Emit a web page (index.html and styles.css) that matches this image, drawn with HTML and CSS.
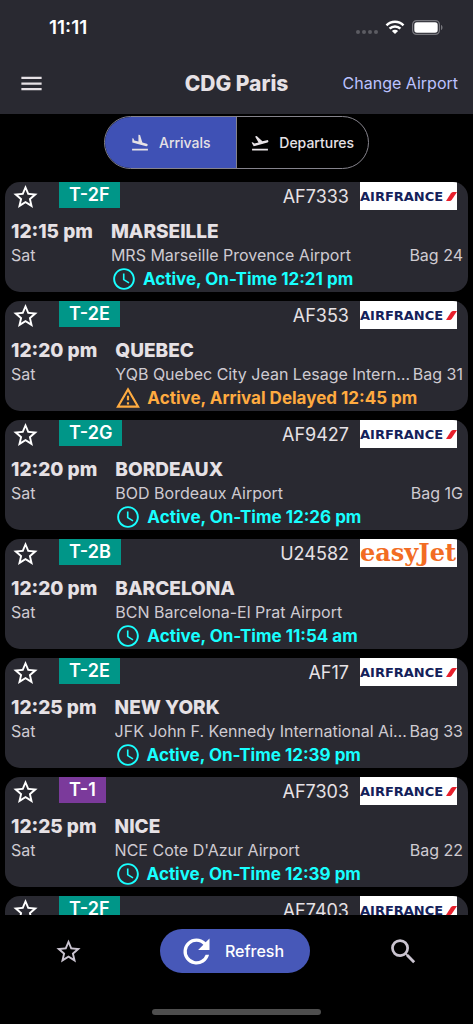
FILE: index.html
```html
<!DOCTYPE html>
<html lang="en">
<head>
<meta charset="utf-8">
<meta name="viewport" content="width=device-width, initial-scale=1">
<title>CDG Paris</title>
<link rel="stylesheet" href="styles.css">
</head>
<body>
<svg class="sprite" aria-hidden="true">
  <symbol id="star" viewBox="0 0 24 24"><path d="M22 9.24l-7.19-.62L12 2 9.19 8.63 2 9.24l5.46 4.73L5.82 21 12 17.27 18.18 21l-1.63-7.03L22 9.24zM12 15.4l-3.76 2.27 1-4.28-3.32-2.88 4.38-.38L12 6.1l1.71 4.04 4.38.38-3.32 2.88 1 4.28L12 15.4z"/></symbol>
  <symbol id="clock" viewBox="0 0 24 24"><path d="M11.99 2C6.47 2 2 6.48 2 12s4.47 10 9.99 10C17.52 22 22 17.52 22 12S17.52 2 11.99 2zM12 20.2c-4.53 0-8.2-3.67-8.2-8.2s3.67-8.2 8.2-8.2 8.2 3.67 8.2 8.2-3.67 8.2-8.2 8.2zm.5-13.2H11v6l5.25 3.15.75-1.23-4.5-2.67z"/></symbol>
  <symbol id="warning" viewBox="0 0 24 24"><path d="M12 5.99L19.53 19H4.47L12 5.99M12 2L1 21h22L12 2zm1 14h-2v2h2v-2zm0-6h-2v4h2v-4z"/></symbol>
  <symbol id="slash" viewBox="0 0 12 9"><path fill="#e8202c" d="M1 9L6 1.200Q6.800 0 8.500 0H12L7 7.500Q6 9 4.500 9z"/></symbol>
</svg>

<header class="app-header">
  <div class="status-bar">
    <span class="clock">11:11</span>
    <span class="indicators">
      <svg class="signal" width="22" height="14" viewBox="0 0 22 14"><g fill="#5c5c63"><circle cx="2" cy="11" r="2"/><circle cx="8" cy="11" r="2"/><circle cx="14" cy="11" r="2"/><circle cx="20" cy="11" r="2"/></g></svg>
      <svg width="20" height="14" viewBox="0 0 20 14"><path fill="none" stroke="#fff" stroke-width="2.500" d="M1.500 5.400a12 12 0 0 1 17 0M4.600 8.700a7.600 7.600 0 0 1 10.800 0"/><path fill="#fff" d="M6.900 11a4.400 4.400 0 0 1 6.200 0L10 14z"/></svg>
      <svg width="31" height="15" viewBox="0 0 31 15"><rect x=".6" y=".6" width="26.800" height="13.800" rx="4" fill="none" stroke="#77777d" stroke-width="1.200"/><rect x="2.300" y="2.300" width="23.400" height="10.400" rx="2.600" fill="#fff"/><path fill="#77777d" d="M29 5c2 .6 2 4.400 0 5z"/></svg>
    </span>
  </div>
  <div class="toolbar">
    <button class="menu" aria-label="Menu"><svg width="27" height="27" viewBox="0 0 24 24"><path d="M3 18h18v-2H3v2zm0-5h18v-2H3v2zm0-7v2h18V6H3z"/></svg></button>
    <h1 class="title">CDG Paris</h1>
    <button class="change">Change Airport</button>
  </div>
</header>

<nav class="segments">
  <button class="segment selected" aria-pressed="true"><svg width="20" height="20" viewBox="0 0 24 24"><path d="M2.500 19h19v2h-19v-2zm16.840-3.150c.8.210 1.620-.260 1.840-1.060.210-.8-.260-1.620-1.060-1.840l-5.310-1.420-2.760-9.020L10.120 2v8.280L5.150 8.950l-.930-2.320-1.450-.390v5.170l16.570 4.440z"/></svg>Arrivals</button>
  <button class="segment" aria-pressed="false"><svg width="20" height="20" viewBox="0 0 24 24"><path d="M2.500 19h19v2h-19zm19.570-9.360c-.210-.8-1.040-1.280-1.840-1.060L14.920 10l-6.900-6.430-1.930.510 4.140 7.170-4.970 1.330-1.970-1.540-1.450.390 2.590 4.490L21 11.490c.810-.230 1.280-1.050 1.070-1.850z"/></svg>Departures</button>
</nav>

<main class="flights">
  <article class="flight">
    <div class="flight-top"><button class="favorite" aria-label="Favorite"><svg><use href="#star"/></svg></button><span class="terminal">T-2F</span><span class="number">AF7333</span><span class="logo airfrance">AIRFRANCE<svg><use href="#slash"/></svg></span></div>
    <div class="flight-body"><span class="time">12:15 pm</span><h2 class="city">MARSEILLE</h2><span class="day">Sat</span><span class="airport">MRS Marseille Provence Airport</span><span class="bag">Bag 24</span><span class="state"><svg><use href="#clock"/></svg>Active, On-Time 12:21 pm</span></div>
  </article>
  <article class="flight">
    <div class="flight-top"><button class="favorite" aria-label="Favorite"><svg><use href="#star"/></svg></button><span class="terminal">T-2E</span><span class="number">AF353</span><span class="logo airfrance">AIRFRANCE<svg><use href="#slash"/></svg></span></div>
    <div class="flight-body"><span class="time">12:20 pm</span><h2 class="city">QUEBEC</h2><span class="day">Sat</span><span class="airport">YQB Quebec City Jean Lesage International Airport</span><span class="bag">Bag 31</span><span class="state delayed"><svg><use href="#warning"/></svg>Active, Arrival Delayed 12:45 pm</span></div>
  </article>
  <article class="flight">
    <div class="flight-top"><button class="favorite" aria-label="Favorite"><svg><use href="#star"/></svg></button><span class="terminal">T-2G</span><span class="number">AF9427</span><span class="logo airfrance">AIRFRANCE<svg><use href="#slash"/></svg></span></div>
    <div class="flight-body"><span class="time">12:20 pm</span><h2 class="city">BORDEAUX</h2><span class="day">Sat</span><span class="airport">BOD Bordeaux Airport</span><span class="bag">Bag 1G</span><span class="state"><svg><use href="#clock"/></svg>Active, On-Time 12:26 pm</span></div>
  </article>
  <article class="flight">
    <div class="flight-top"><button class="favorite" aria-label="Favorite"><svg><use href="#star"/></svg></button><span class="terminal">T-2B</span><span class="number">U24582</span><span class="logo easyjet">easyJet</span></div>
    <div class="flight-body"><span class="time">12:20 pm</span><h2 class="city">BARCELONA</h2><span class="day">Sat</span><span class="airport">BCN Barcelona-El Prat Airport</span><span class="state"><svg><use href="#clock"/></svg>Active, On-Time 11:54 am</span></div>
  </article>
  <article class="flight">
    <div class="flight-top"><button class="favorite" aria-label="Favorite"><svg><use href="#star"/></svg></button><span class="terminal">T-2E</span><span class="number">AF17</span><span class="logo airfrance">AIRFRANCE<svg><use href="#slash"/></svg></span></div>
    <div class="flight-body"><span class="time">12:25 pm</span><h2 class="city">NEW YORK</h2><span class="day">Sat</span><span class="airport">JFK John F. Kennedy International Airport</span><span class="bag">Bag 33</span><span class="state"><svg><use href="#clock"/></svg>Active, On-Time 12:39 pm</span></div>
  </article>
  <article class="flight">
    <div class="flight-top"><button class="favorite" aria-label="Favorite"><svg><use href="#star"/></svg></button><span class="terminal purple">T-1</span><span class="number">AF7303</span><span class="logo airfrance">AIRFRANCE<svg><use href="#slash"/></svg></span></div>
    <div class="flight-body"><span class="time">12:25 pm</span><h2 class="city">NICE</h2><span class="day">Sat</span><span class="airport">NCE Cote D'Azur Airport</span><span class="bag">Bag 22</span><span class="state"><svg><use href="#clock"/></svg>Active, On-Time 12:39 pm</span></div>
  </article>
  <article class="flight">
    <div class="flight-top"><button class="favorite" aria-label="Favorite"><svg><use href="#star"/></svg></button><span class="terminal">T-2F</span><span class="number">AF7403</span><span class="logo airfrance">AIRFRANCE<svg><use href="#slash"/></svg></span></div>
  </article>
</main>

<footer class="bottom-bar">
  <div class="actions">
    <button class="muted" aria-label="Favorites"><svg width="29" height="29"><use href="#star"/></svg></button>
    <button class="refresh"><svg width="39" height="39" viewBox="0 0 24 24"><path d="M17.650 6.350A7.958 7.958 0 0 0 12 4a8 8 0 1 0 7.730 10h-2.080A5.990 5.990 0 1 1 12 6c1.660 0 3.140.690 4.220 1.780L13 11h7V4l-2.350 2.350z"/></svg>Refresh</button>
    <button class="muted" aria-label="Search"><svg width="33" height="33" viewBox="0 0 24 24"><path d="M15.500 14h-.790l-.280-.270A6.471 6.471 0 0 0 16 9.500 6.500 6.500 0 1 0 9.500 16c1.610 0 3.090-.590 4.230-1.570l.270.280v.790l5 4.990L20.490 19l-4.990-5zm-6 0C7.010 14 5 11.990 5 9.500S7.010 5 9.500 5 14 7.010 14 9.500 11.990 14 9.500 14z"/></svg></button>
  </div>
  <div class="home-indicator"></div>
</footer>
</body>
</html>
```
FILE: styles.css
```css
* { box-sizing: border-box; }

body {
  margin: 0;
  height: 100vh;
  display: flex;
  flex-direction: column;
  background: #000;
  color: #e6e1e5;
  font-family: Inter, "Liberation Sans", sans-serif;
  font-size: 16px;
}

button {
  margin: 0;
  padding: 0;
  border: 0;
  background: none;
  color: inherit;
  font: inherit;
}

svg { display: block; flex: none; fill: currentColor; }
.sprite { position: absolute; width: 0; height: 0; }

.app-header { flex: none; background: #292931; }

.status-bar {
  display: flex;
  justify-content: space-between;
  align-items: center;
  height: 54px;
  padding: 0 30px 0 49px;
}
.clock { color: #fff; font-size: 19px; font-weight: 600; }
.indicators { display: flex; align-items: center; gap: 7px; }
.signal { margin-top: 2px; }

.toolbar {
  display: grid;
  grid-template-columns: 1fr auto 1fr;
  align-items: center;
  height: 58px;
  margin-bottom: 2px;
  padding: 0 15px;
}
.menu { justify-self: start; padding-left: 3px; }
.title { margin: 0; font-size: 21px; font-weight: 800; }
.change { justify-self: end; color: #bcc2ff; white-space: nowrap; }

.segments {
  display: grid;
  grid-template-columns: 1fr 1fr;
  flex: none;
  width: 56%;
  height: 53px;
  margin: 2px auto 13px;
  border: 1px solid #85838c;
  border-radius: 27px;
  overflow: hidden;
}
.segment {
  display: flex;
  align-items: center;
  justify-content: center;
  gap: 9px;
  font-size: 14px;
  font-weight: 500;
}
.segment.selected { background: #3f51b5; border-right: 1px solid #85838c; }

.flights {
  flex: 1;
  min-height: 0;
  display: flex;
  flex-direction: column;
  gap: 9px;
  padding: 0 5px;
  overflow-y: auto;
  scrollbar-width: none;
}
.flight {
  flex: none;
  padding-bottom: 1px;
  border-radius: 15px;
  background: #292931;
  overflow: hidden;
}

.flight-top { display: flex; align-items: flex-start; height: 37px; padding: 0 11px 0 6px; }
.favorite { color: #fff; }
.favorite svg { width: 29px; height: 30px; }
.terminal {
  height: 26px;
  margin-left: 19px;
  padding: 0 10px;
  background: #009688;
  color: #fff;
  font-size: 18px;
  font-weight: 600;
  line-height: 26px;
}
.terminal.purple { background: #7b3a9b; }
.number { margin-left: auto; font-size: 18px; line-height: 30px; }
.logo {
  display: flex;
  align-items: center;
  justify-content: space-between;
  width: 97px;
  height: 28px;
  margin-left: 11px;
  background: #fff;
  overflow: hidden;
}
.airfrance { color: #14215a; font: bold 13px "DejaVu Sans", sans-serif; }
.airfrance svg { width: 12px; height: 9px; }
.easyjet { color: #f26c23; font: bold 24px "DejaVu Serif", serif; line-height: 24px; }

.flight-body {
  display: grid;
  grid-template: "time city city" 24px "day airport bag" 24px ". state state" 24px / auto 1fr auto;
  align-items: center;
  padding: 0 5px 0 6px;
}
.time { grid-area: time; margin-right: 18px; font-size: 19px; font-weight: 800; }
.city { grid-area: city; margin: 0; font-size: 19px; font-weight: 800; }
.day { grid-area: day; }
.airport { grid-area: airport; overflow: hidden; text-overflow: ellipsis; white-space: nowrap; }
.bag { grid-area: bag; }
.day, .airport, .bag { color: #cfcbd1; }
.state {
  grid-area: state;
  display: flex;
  align-items: center;
  gap: 6px;
  color: #18ffff;
  font-size: 17px;
  font-weight: 700;
}
.state svg { width: 26px; height: 26px; }
.state.delayed { color: #ffab40; }

.bottom-bar { flex: none; }
.actions {
  display: flex;
  justify-content: space-between;
  align-items: center;
  height: 72px;
  padding: 0 53px 0 54px;
}
.muted { color: #cac4d0; }
.refresh {
  display: flex;
  align-items: center;
  gap: 9px;
  height: 44px;
  padding: 0 26px 0 17px;
  border-radius: 22px;
  background: #4758b8;
  color: #fff;
  font-weight: 500;
}
.home-indicator {
  width: 169px;
  height: 6px;
  margin: 22px auto 9px;
  border-radius: 3px;
  background: #4e4e4e;
}
```
